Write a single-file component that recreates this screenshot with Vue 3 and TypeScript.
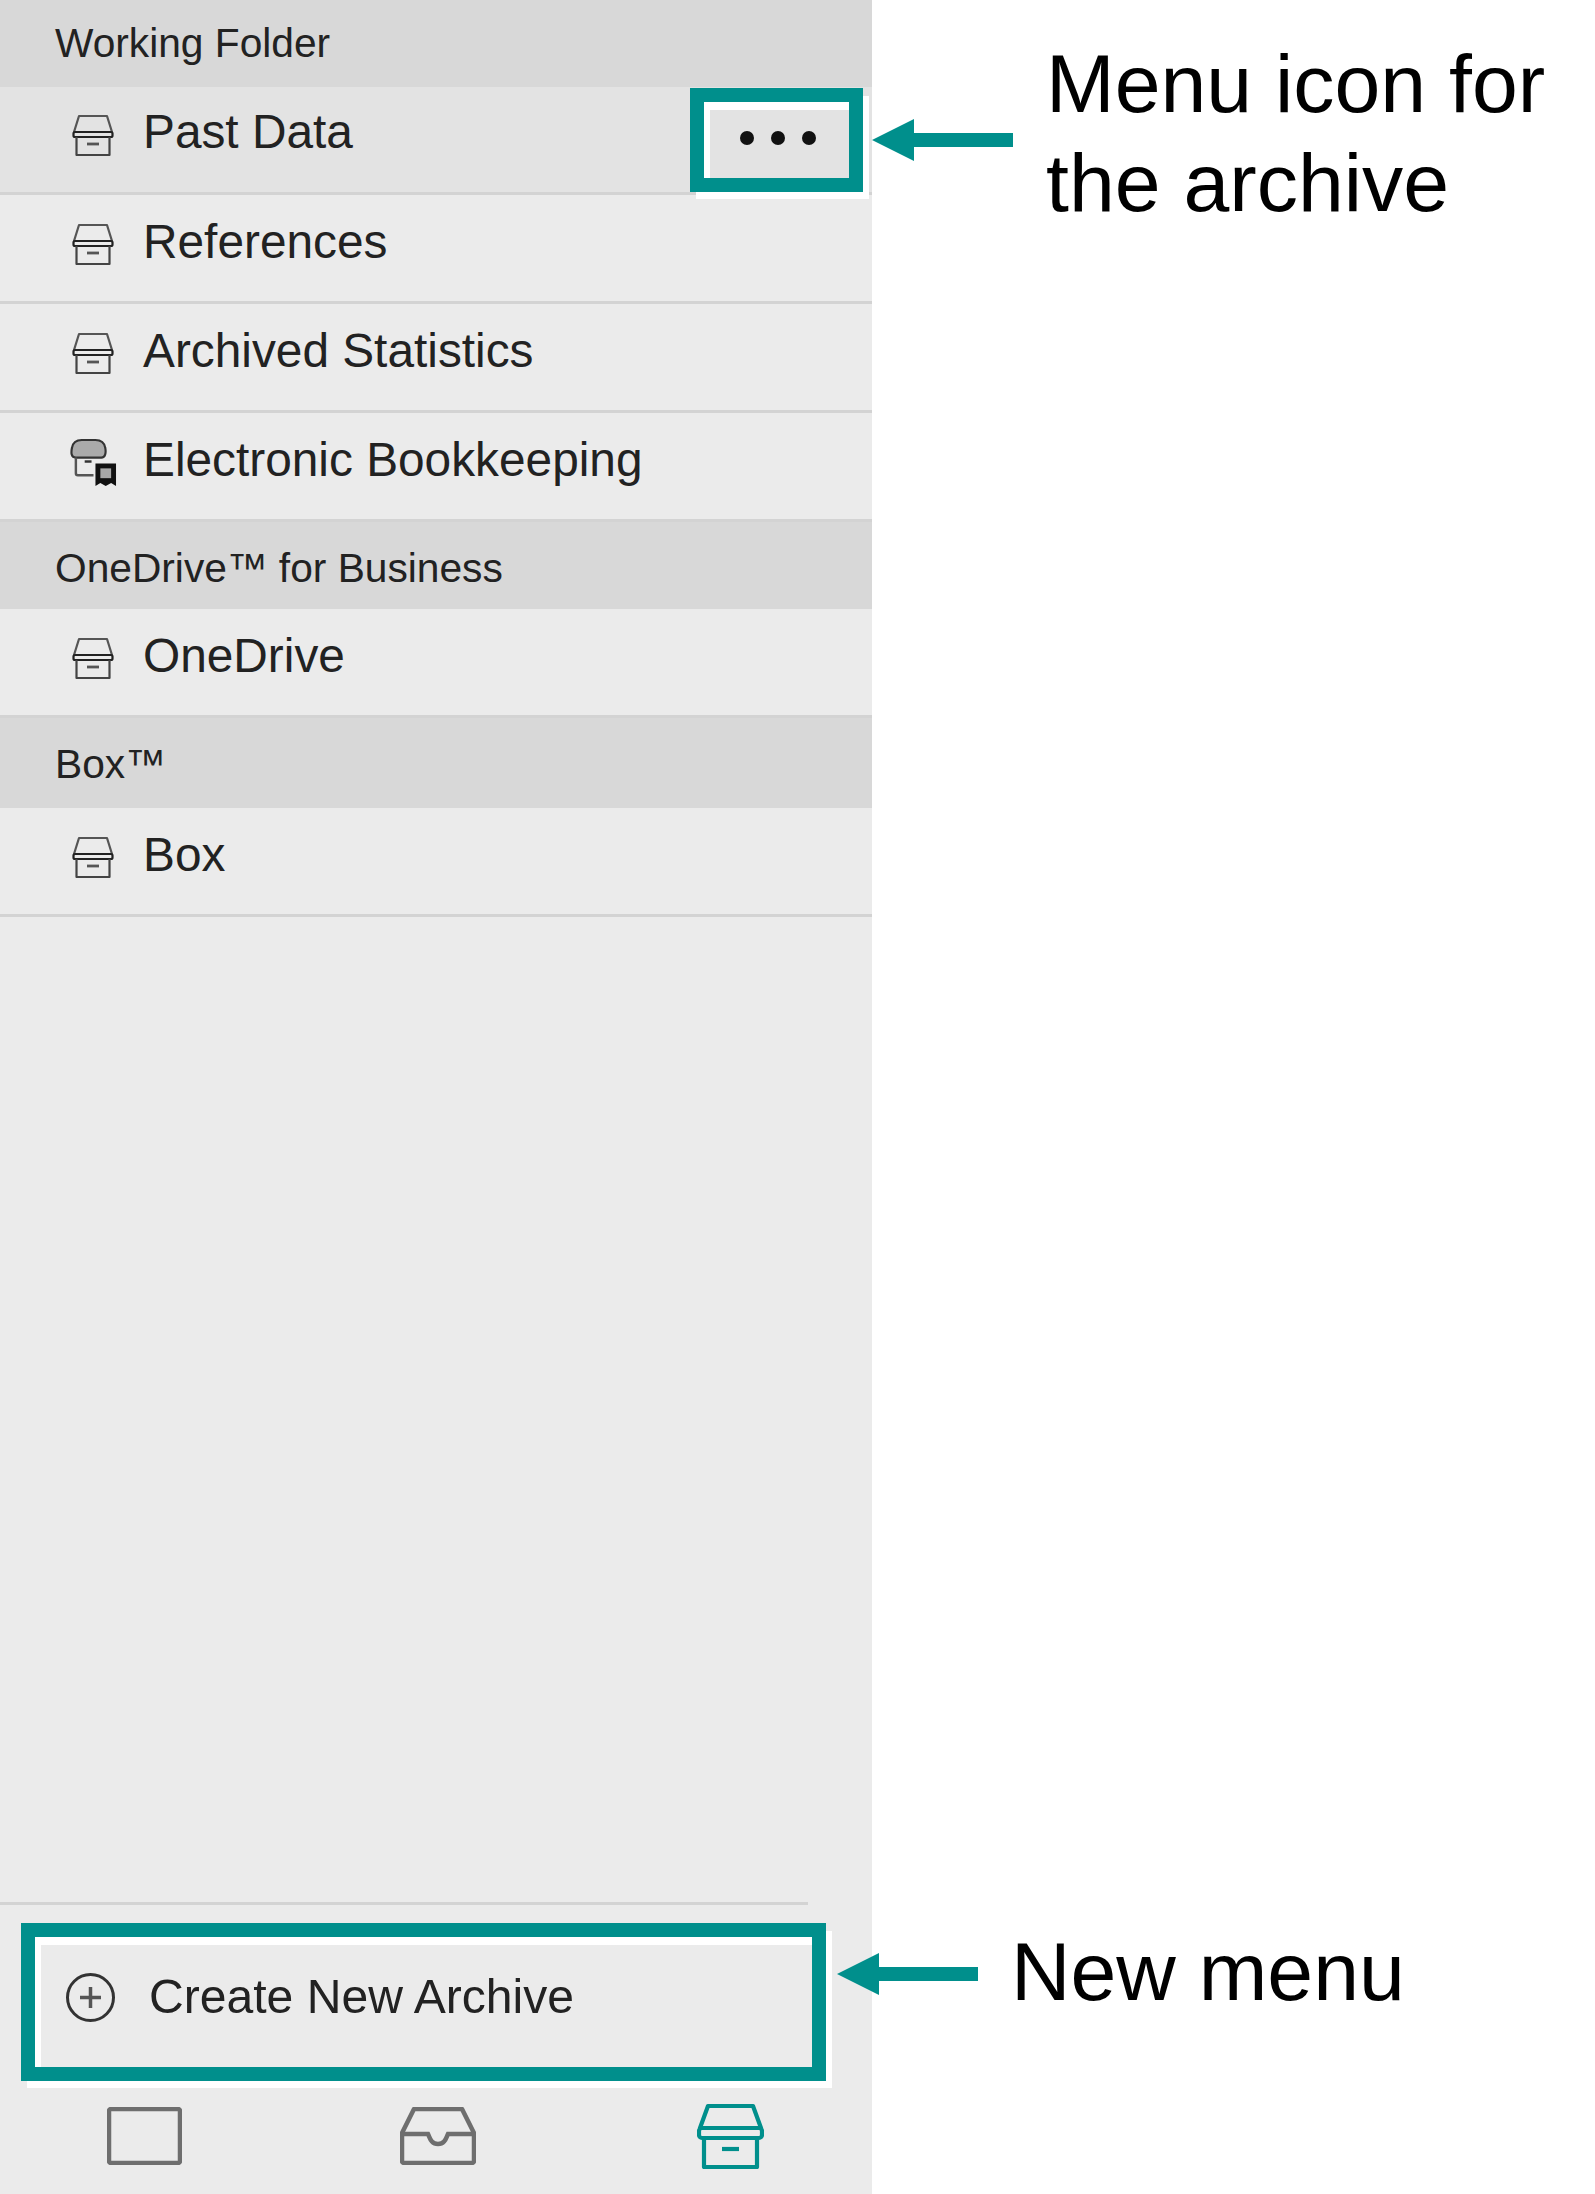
<script setup lang="ts">
interface Archive {
  name: string
  secure?: boolean
  active?: boolean
}

interface Group {
  title: string
  items: Archive[]
}

const groups: Group[] = [
  {
    title: 'Working Folder',
    items: [
      { name: 'Past Data', active: true },
      { name: 'References' },
      { name: 'Archived Statistics' },
      { name: 'Electronic Bookkeeping', secure: true }
    ]
  },
  { title: 'OneDrive™ for Business', items: [{ name: 'OneDrive' }] },
  { title: 'Box™', items: [{ name: 'Box' }] }
]
</script>

<template>
  <div class="page">
    <svg class="defs" width="0" height="0" aria-hidden="true">
      <symbol id="archive-small" viewBox="0 0 42 43">
        <path d="M7 2H35L40 18H2Z" fill="none" stroke="#555" stroke-width="2.200" stroke-linejoin="round" />
        <rect x="1.500" y="18" width="39" height="5" rx="1.500" fill="none" stroke="#222" stroke-width="2.200" />
        <path d="M4.500 23V41H37.500V23" fill="none" stroke="#444" stroke-width="2.200" stroke-linejoin="round" />
        <path d="M15 30H27" stroke="#555" stroke-width="2.800" />
      </symbol>
      <symbol id="archive" viewBox="0 0 67 66">
        <path d="M11 3H56L64 25H3Z" fill="none" stroke="currentColor" stroke-width="4.200" stroke-linejoin="round" />
        <rect x="2" y="25" width="63" height="10" rx="3" fill="none" stroke="currentColor" stroke-width="4.200" />
        <path d="M7 35V64H60V35" fill="none" stroke="currentColor" stroke-width="4.200" stroke-linejoin="round" />
        <path d="M25 46H42" stroke="currentColor" stroke-width="4.200" />
      </symbol>
    </svg>

    <aside class="sidebar">
      <div class="groups">
        <section v-for="group in groups" :key="group.title" class="group">
          <div class="group-title">{{ group.title }}</div>
          <div v-for="item in group.items" :key="item.name" class="row" :class="{ active: item.active }">
            <svg v-if="item.secure" class="icon-secure" viewBox="0 0 48 50">
              <path d="M6 20C1 20 1 15 2 10C3 4 7 2 12 2H26C31 2 35 4 36 10C37 15 36 20 32 20Z" fill="#aaa" stroke="#333" stroke-width="2.200" />
              <path d="M6 20V36C6 37 7 38 8 38H24" fill="none" stroke="#555" stroke-width="2.500" />
              <path d="M15 24H22" stroke="#333" stroke-width="2.500" />
              <path d="M26 26H47V49L42 46L36.500 49L31 46L26 49Z" fill="#111" />
              <rect x="31" y="31" width="11" height="10" fill="#a8a8a8" />
            </svg>
            <svg v-else class="icon-archive">
              <use href="#archive-small" />
            </svg>
            <span class="row-name">{{ item.name }}</span>
            <span v-if="item.active" class="more">
              <i></i><i></i><i></i>
            </span>
            <template v-if="item.active">
              <span class="mark mark-white mark-more-white"></span>
              <span class="mark mark-teal mark-more-teal"></span>
            </template>
          </div>
        </section>
      </div>

      <div class="footer">
        <div class="divider"></div>
        <div class="create">
          <svg class="icon-plus" viewBox="0 0 49 49">
            <circle cx="24.500" cy="24.500" r="23" fill="none" stroke="#333" stroke-width="3" />
            <path d="M14 24.500H35M24.500 14V35" stroke="#555" stroke-width="3.500" />
          </svg>
          <span class="create-label">Create New Archive</span>
          <span class="mark mark-white mark-create-white"></span>
          <span class="mark mark-teal mark-create-teal"></span>
        </div>
        <nav class="tabs">
          <div class="tab">
            <svg class="tab-square" viewBox="0 0 75 58">
              <rect x="2" y="2" width="71" height="54" rx="2" fill="none" stroke="#6e6e6e" stroke-width="4.500" />
            </svg>
          </div>
          <div class="tab">
            <svg class="tab-inbox" viewBox="0 0 76 58">
              <path d="M2 26L14 2H62L74 26V54C74 55 73 56 72 56H4C3 56 2 55 2 54Z" fill="none" stroke="#6e6e6e" stroke-width="4.500" stroke-linejoin="round" />
              <path d="M2 27H28C30 31 31 37 38 37C45 37 46 31 48 27H74" fill="none" stroke="#6e6e6e" stroke-width="4.500" />
            </svg>
          </div>
          <div class="tab">
            <svg class="tab-archive">
              <use href="#archive" />
            </svg>
          </div>
        </nav>
      </div>
    </aside>

    <div class="note note-menu">Menu icon for<br />the archive</div>
    <svg class="arrow arrow-menu" viewBox="0 0 141 42">
      <polygon points="0,21 42,0 42,14 141,14 141,28 42,28 42,42" />
    </svg>

    <div class="note note-new">New menu</div>
    <svg class="arrow arrow-new" viewBox="0 0 141 42">
      <polygon points="0,21 42,0 42,14 141,14 141,28 42,28 42,42" />
    </svg>
  </div>
</template>

<style scoped>
.page {
  position: relative;
  width: 1595px;
  height: 2194px;
  overflow: hidden;
  background: #fff;
  font-family: "Liberation Sans", Arial, sans-serif;
  color: #222;
}

.defs {
  position: absolute;
}

.sidebar {
  display: flex;
  flex-direction: column;
  width: 872px;
  height: 100%;
  background: #ebebeb;
}

.groups {
  flex: 1;
}

.group-title {
  box-sizing: border-box;
  height: 87px;
  padding: 23px 0 0 55px;
  background: #d8d8d8;
  font-size: 40.7px;
  line-height: 46px;
}

.group:nth-child(1) .group-title {
  padding-top: 20px;
}

.group:nth-child(3) .group-title {
  height: 90px;
}

.row {
  position: relative;
  box-sizing: border-box;
  display: flex;
  align-items: flex-start;
  height: 109px;
  padding: 19px 56px 0 72px;
  border-bottom: 3px solid #d3d3d3;
}

.row.active {
  height: 108px;
  padding-top: 17px;
  background: #e3e3e3;
}

.icon-archive {
  flex: none;
  width: 42px;
  height: 43px;
  margin: 9px 29px 0 0;
}

.row.active .icon-archive {
  margin-top: 10px;
}

.icon-secure {
  flex: none;
  width: 47px;
  height: 49px;
  margin: 6px 26px 0 -2px;
}

.row-name {
  font-size: 47.8px;
  line-height: 56px;
}

.more {
  display: flex;
  gap: 17px;
  margin: 27px 0 0 auto;
}

.more i {
  width: 14px;
  height: 14px;
  border-radius: 50%;
  background: #111;
}

.mark {
  position: absolute;
  box-sizing: border-box;
  border: 14px solid;
}

.mark-white {
  border-color: #fff;
}

.mark-teal {
  border-color: #008f8c;
}

.mark-more-white {
  left: 696px;
  top: 9px;
  width: 173px;
  height: 103px;
}

.mark-more-teal {
  left: 690px;
  top: 1px;
  width: 173px;
  height: 104px;
}

.footer {
  flex: none;
}

.divider {
  width: 808px;
  height: 3px;
  background: #d3d3d3;
}

.create {
  position: relative;
  display: flex;
  align-items: center;
  height: 185px;
  padding-left: 66px;
}

.icon-plus {
  flex: none;
  width: 49px;
  height: 49px;
  margin-right: 34px;
}

.create-label {
  margin-bottom: 4px;
  font-size: 48.1px;
  line-height: 56px;
}

.mark-create-white {
  left: 27px;
  top: 26px;
  width: 805px;
  height: 157px;
}

.mark-create-teal {
  left: 21px;
  top: 18px;
  width: 805px;
  height: 158px;
}

.tabs {
  display: grid;
  grid-template-columns: repeat(3, 293px);
  align-items: center;
  justify-items: center;
  height: 92px;
  margin-left: -2px;
  padding-bottom: 12px;
}

.tab {
  display: flex;
}

.tab-square {
  width: 75px;
  height: 58px;
}

.tab-inbox {
  width: 76px;
  height: 58px;
}

.tab-archive {
  width: 67px;
  height: 66px;
  color: #008f8c;
}

.note {
  position: absolute;
  color: #000;
  font-size: 82.4px;
  line-height: 99px;
  white-space: nowrap;
}

.note-menu {
  left: 1046px;
  top: 34px;
}

.note-new {
  left: 1011px;
  top: 1922px;
}

.arrow {
  position: absolute;
  width: 141px;
  height: 42px;
  fill: #008f8c;
}

.arrow-menu {
  left: 872px;
  top: 119px;
}

.arrow-new {
  left: 837px;
  top: 1953px;
}
</style>
